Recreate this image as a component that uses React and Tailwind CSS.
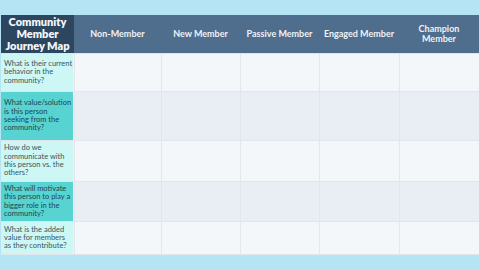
import React from 'react';

const cols = ['Non-Member', 'New Member', 'Passive Member', 'Engaged Member', 'Champion Member'];
const widths = ['w-[87px]', 'w-[79px]', 'w-[79px]', 'w-[80px]', 'w-[80px]'];

const rows = [
  { q: ['What is their current', 'behavior in the', 'community?'], h: 'h-[38px]', dark: false },
  { q: ['What value/solution', 'is this person', 'seeking from the', 'community?'], h: 'h-[49px]', dark: true },
  { q: ['How do we', 'communicate with', 'this person vs. the', 'others?'], h: 'h-[41px]', dark: false },
  { q: ['What will motivate', 'this person to play a', 'bigger role in the', 'community?'], h: 'h-[40px]', dark: true },
  { q: ['What is the added', 'value for members', 'as they contribute?'], h: 'h-[33px]', dark: false },
];

const App = () => {
  return (
    <div className="w-[480px] h-[270px] bg-[#b5e4f4] pt-[15px] pl-px font-['Lato',sans-serif]">
      <div className="w-[478px] flex flex-col">
        {/* header */}
        <div className="flex h-[39px] border-b border-[#dfe4ea]">
          <div className="w-[73px] bg-[#2c4660] text-[#f3f6f9] font-extrabold text-[11px] leading-[11.7px] flex items-center justify-center text-center">
            Community<br />Member<br />Journey Map
          </div>
          {cols.map((c, i) => (
            <div key={c} className={`${widths[i]} bg-[#4f6d8c] text-[#eef2f6] font-bold text-[9px] leading-[10px] flex items-center justify-center text-center ${i === 4 ? 'px-5' : 'px-0 whitespace-nowrap'}`}>
              {c}
            </div>
          ))}
        </div>

        {rows.map((r, k) => (
          <div key={k} className={`flex ${r.h} border-b border-[#e2e6ec]`}>
            <div className={`w-[73px] ${r.dark ? 'bg-[#57d3d2] text-[#1f4550]' : 'bg-[#cdf7f5] text-[#3a5560]'} text-[7.5px] leading-[8.3px] flex flex-col justify-center pl-[3px] whitespace-nowrap border-r border-[#eef3f6]`}>
              {r.q.map((l) => (
                <span key={l}>{l}</span>
              ))}
            </div>
            {widths.map((w, i) => (
              <div key={i} className={`${w} ${r.dark ? 'bg-[#e9edf4]' : 'bg-[#f3f7fa]'} border-l border-[#e3e7ec]`} />
            ))}
          </div>
        ))}
      </div>
    </div>
  );
};

export default App;
